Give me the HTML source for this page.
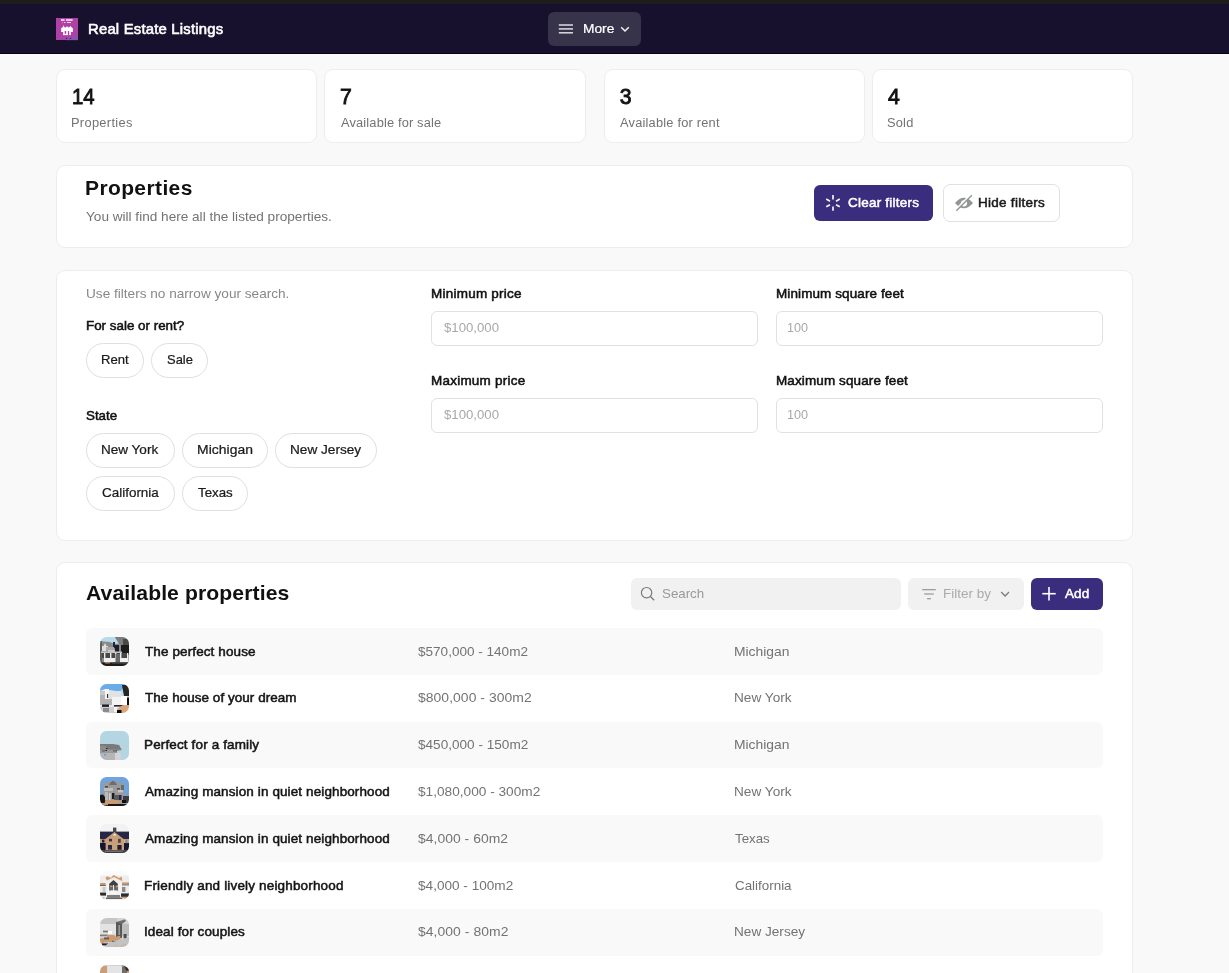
<!DOCTYPE html>
<html lang="en">
<head>
<meta charset="utf-8">
<title>Real Estate Listings</title>
<style>
*{box-sizing:border-box;margin:0;padding:0}
html,body{width:1229px;height:973px;overflow:hidden;background:#f9f9f9}
body{position:relative;font-family:"Liberation Sans",sans-serif;color:#111}
.abs{position:absolute}
.t{position:absolute;white-space:nowrap;line-height:1}
.card{position:absolute;background:#fff;border:1px solid #ededed;border-radius:9px}
#strip{left:0;top:0;width:1229px;height:4px;background:#1d1d1b}
#hdr{left:0;top:4px;width:1229px;height:50px;background:#17112e;border-bottom:1px solid #06021f}
#logo{left:56px;top:18px;width:22px;height:22px;background:#b03fa6}
#more{left:548px;top:12px;width:93px;height:34px;border-radius:6px;background:#37334a}
.pill{position:absolute;height:35px;border:1px solid #dfdfdf;border-radius:18px;background:#fff}
.inp{position:absolute;height:35px;width:327px;border:1px solid #e1e1e1;border-radius:6px;background:#fff}
.row{position:absolute;left:86px;width:1017px;height:46.75px;border-radius:6px}
.row.z{background:#f9f9f9}
#txt{position:absolute;left:0;top:0;width:1229px;height:973px;will-change:transform}
</style>
</head>
<body>
<div id="strip" class="abs"></div>
<div id="hdr" class="abs"></div>
<div id="logo" class="abs"></div>
<div id="more" class="abs"></div>
<div class="card" style="left:56px;top:69px;width:261px;height:74px"></div>
<div class="card" style="left:324px;top:69px;width:262px;height:74px"></div>
<div class="card" style="left:604px;top:69px;width:261px;height:74px"></div>
<div class="card" style="left:872px;top:69px;width:261px;height:74px"></div>
<div class="card" style="left:56px;top:165px;width:1077px;height:83px"></div>
<div class="abs" style="left:814px;top:185px;width:119px;height:36px;border-radius:6px;background:#3a2d7d"></div>
<div class="abs" style="left:943px;top:184px;width:117px;height:38px;border-radius:7px;background:#fff;border:1px solid #e1e1e1"></div>
<div class="card" style="left:56px;top:270px;width:1077px;height:271px"></div>
<div class="pill" style="left:86px;top:343px;width:58px"></div>
<div class="pill" style="left:151px;top:343px;width:57px"></div>
<div class="pill" style="left:86px;top:433px;width:89px"></div>
<div class="pill" style="left:182px;top:433px;width:86px"></div>
<div class="pill" style="left:275px;top:433px;width:102px"></div>
<div class="pill" style="left:86px;top:476px;width:89px"></div>
<div class="pill" style="left:182px;top:476px;width:66px"></div>
<div class="inp" style="left:431px;top:311px"></div>
<div class="inp" style="left:776px;top:311px"></div>
<div class="inp" style="left:431px;top:398px"></div>
<div class="inp" style="left:776px;top:398px"></div>
<div class="card" style="left:56px;top:562px;width:1077px;height:430px"></div>
<div class="abs" style="left:631px;top:578px;width:270px;height:31.6px;border-radius:6px;background:#f1f1f1"></div>
<div class="abs" style="left:908px;top:578px;width:116px;height:31.6px;border-radius:6px;background:#f1f1f1"></div>
<div class="abs" style="left:1031px;top:578px;width:72px;height:31.6px;border-radius:6px;background:#3a2d7d"></div>

<div class="row z" style="top:628.30px;height:46.60px"></div>
<svg class="abs" style="left:100px;top:636.80px" width="29" height="29" viewBox="0 0 29 29"><defs><clipPath id="c0"><rect width="29" height="29" rx="6.5"/></clipPath><filter id="f0" x="-10%" y="-10%" width="120%" height="120%"><feGaussianBlur stdDeviation=".45"/></filter></defs><g clip-path="url(#c0)"><g filter="url(#f0)"><rect x="-3" y="-3" width="35" height="35" fill="#8a8a8a"/><polygon points="0,0 15,0 19,6.5 14,7 10,5 4,4.5 0,4" fill="#b6dcea"/><polygon points="15,0 29,0 29,9 22,9 19,6.5" fill="#7d7d7d"/><rect x="21" y="8" width="8" height="10" fill="#1b1b1b"/><rect x="23" y="2" width="6" height="6" fill="#4a4a4a"/><rect x="13" y="5" width="2" height="6" fill="#26233a"/><rect x="15" y="8" width="4" height="7" fill="#1c1a2c"/><polygon points="2,13 5,6 8,13" fill="#e6e6e6"/><rect x="2" y="9" width="6" height="5" fill="#dedede"/><rect x="0" y="4" width="2" height="25" fill="#5e5e5e"/><rect x="6" y="10" width="8" height="4" fill="#a9a9a9"/><rect x="8" y="13" width="7" height="2" fill="#c9c9c9"/><rect x="1" y="14.5" width="21" height="1.5" fill="#c4c4c4"/><rect x="2" y="16" width="26" height="5" fill="#4a4a4a"/><rect x="4" y="16" width="1.4" height="9" fill="#ececec"/><rect x="10" y="16" width="1.4" height="9" fill="#ececec"/><rect x="15" y="16" width="1.4" height="9" fill="#ececec"/><rect x="20" y="16" width="1.4" height="9" fill="#ececec"/><rect x="27" y="16" width="1.4" height="9" fill="#ececec"/><rect x="4" y="21" width="11" height="4.5" fill="#efefef"/><rect x="20" y="21" width="8" height="4.5" fill="#f0f0f0"/><rect x="15.5" y="17" width="4.5" height="8" fill="#6a6a6a"/><rect x="0" y="25.4" width="29" height="3.6" fill="#1e1e1e"/><rect x="5" y="25.4" width="5" height="1" fill="#d79a5f"/><rect x="12" y="25.4" width="16" height="1.2" fill="#4d4d4d"/></g></g></svg>
<div class="row" style="top:674.90px;height:46.85px"></div>
<svg class="abs" style="left:100px;top:683.90px" width="29" height="29" viewBox="0 0 29 29"><defs><clipPath id="c1"><rect width="29" height="29" rx="6.5"/></clipPath><filter id="f1" x="-10%" y="-10%" width="120%" height="120%"><feGaussianBlur stdDeviation=".45"/></filter></defs><g clip-path="url(#c1)"><g filter="url(#f1)"><rect x="-3" y="-3" width="35" height="35" fill="#e9e9e9"/><polygon points="0,0 29,0 29,4 22,9 16,7 9,6 5,5 0,7" fill="#6aabea"/><polygon points="21,8 22,4 24,8 24,12 21,12" fill="#bfe0ef"/><polygon points="22,1 29,1 29,12 24,12 23,7" fill="#262626"/><rect x="0" y="7" width="5" height="14" fill="#c9c9c9"/><rect x="0" y="11" width="13" height="10" fill="#b4b4b4"/><rect x="5" y="5" width="4" height="10" fill="#f4f4f4"/><rect x="7" y="10" width="1.2" height="4" fill="#333"/><rect x="9" y="7" width="12" height="8" fill="#e2e2e2"/><rect x="12" y="13" width="10" height="8" fill="#f3f3f3"/><rect x="21" y="12" width="6" height="9" fill="#ffffff"/><rect x="27" y="13" width="2" height="8" fill="#111"/><rect x="27" y="12.6" width="2" height="1.2" fill="#c98a55"/><rect x="2" y="20.5" width="7" height="2.4" fill="#1c1a2a"/><rect x="14" y="21" width="9" height="1.6" fill="#2a2740"/><polygon points="17,25 23,21 29,21 29,29 21,29" fill="#d9a67e"/><rect x="17" y="26" width="4.5" height="3" fill="#111"/><rect x="0" y="23" width="17" height="6" fill="#cfcfcf"/><rect x="3" y="24" width="6" height="4" fill="#8c8c8c"/><rect x="14" y="23" width="3" height="5" fill="#f5f5f5"/></g></g></svg>
<div class="row z" style="top:721.75px;height:46.65px"></div>
<svg class="abs" style="left:100px;top:731.00px" width="29" height="29" viewBox="0 0 29 29"><defs><clipPath id="c2"><rect width="29" height="29" rx="6.5"/></clipPath><filter id="f2" x="-10%" y="-10%" width="120%" height="120%"><feGaussianBlur stdDeviation=".45"/></filter></defs><g clip-path="url(#c2)"><g filter="url(#f2)"><rect x="-3" y="-3" width="35" height="35" fill="#b4d6e2"/><polygon points="0,13 13,13 13,14 19,14 22,19 17,20 17,29 0,29" fill="#8c8c8c"/><polygon points="0,13 13,13 19,14 21,18.4 9,18.4 4,14.6 0,15" fill="#7a7a7a"/><rect x="0" y="19" width="16" height="3" fill="#9a9a9a"/><rect x="0" y="22" width="17" height="7" fill="#b5b5b5"/><rect x="15" y="22" width="5.5" height="7" fill="#d4d4d4"/><rect x="2" y="19.4" width="3" height="1" fill="#555"/><rect x="13" y="19.4" width="4" height="1" fill="#555"/><rect x="4" y="23" width="2" height="1.4" fill="#5b9be0"/><rect x="6" y="17" width="1.6" height="1" fill="#241f4a"/><rect x="5.5" y="19" width="1.6" height="1" fill="#241f4a"/></g></g></svg>
<div class="row" style="top:768.40px;height:46.50px"></div>
<svg class="abs" style="left:100px;top:777.20px" width="29" height="29" viewBox="0 0 29 29"><defs><clipPath id="c3"><rect width="29" height="29" rx="6.5"/></clipPath><filter id="f3" x="-10%" y="-10%" width="120%" height="120%"><feGaussianBlur stdDeviation=".45"/></filter></defs><g clip-path="url(#c3)"><g filter="url(#f3)"><rect x="-3" y="-3" width="35" height="35" fill="#6fa4de"/><polygon points="3,7 6,5 10,5 12,4 15,4 18,6 19,5 20,4 22,6 24,7 24,19 29,17 29,27 0,27 0,19 3,15" fill="#9a9a9a"/><polygon points="10,6 13,3.4 16,6 17,8 9,8" fill="#6d6d6d"/><rect x="5" y="9" width="3" height="1.6" fill="#4c4c4c"/><rect x="17" y="11" width="3" height="1.6" fill="#505050"/><rect x="21" y="8" width="3" height="5" fill="#6a6a6a"/><rect x="4" y="11" width="9" height="3" fill="#bdbdbd"/><rect x="18" y="13" width="5" height="2.4" fill="#c4c4c4"/><rect x="5" y="15" width="3" height="8" fill="#b9b9b9"/><rect x="12" y="16" width="2.4" height="6" fill="#1a1a1a"/><rect x="9" y="16" width="1.6" height="7" fill="#cfcfcf"/><rect x="19" y="18" width="2.6" height="5" fill="#2d2850"/><rect x="14" y="18" width="5" height="5" fill="#5c5c5c"/><polygon points="0,18 3,17.4 5,20 5,26 0,26" fill="#121212"/><rect x="23" y="19" width="6" height="7" fill="#3a3a3a"/><rect x="22" y="23" width="4" height="3" fill="#111"/><polygon points="8,23 18,23 21,24.4 17,27 4,27 5,25" fill="#c99b73"/><rect x="0" y="27" width="29" height="2" fill="#171717"/><rect x="3" y="26.6" width="5" height="1.6" fill="#c4925f"/></g></g></svg>
<div class="row z" style="top:814.90px;height:46.85px"></div>
<svg class="abs" style="left:100px;top:824.20px" width="29" height="29" viewBox="0 0 29 29"><defs><clipPath id="c4"><rect width="29" height="29" rx="6.5"/></clipPath><filter id="f4" x="-10%" y="-10%" width="120%" height="120%"><feGaussianBlur stdDeviation=".45"/></filter></defs><g clip-path="url(#c4)"><g filter="url(#f4)"><rect x="-3" y="-3" width="35" height="35" fill="#f2f2f2"/><rect x="0" y="7.6" width="29" height="8" fill="#282546"/><rect x="13" y="3.6" width="3.4" height="5" fill="#474747"/><polygon points="14.5,8 25,16 4,16" fill="#c99f7a"/><rect x="5" y="15" width="19.5" height="11.4" fill="#c99f7a"/><rect x="0" y="15" width="5" height="4" fill="#c99f7a"/><rect x="24.5" y="15" width="4.5" height="4" fill="#c99f7a"/><rect x="0" y="19" width="5.6" height="7.4" fill="#161233"/><rect x="24" y="19" width="5" height="7.4" fill="#161233"/><rect x="2" y="15.6" width="2.4" height="3" fill="#222038"/><rect x="25.4" y="15.6" width="2" height="3.6" fill="#8a8a8a"/><rect x="13.6" y="10" width="2" height="1.6" fill="#f1f1f1"/><rect x="9" y="14.8" width="3" height="2.6" fill="#34324c"/><rect x="18" y="14.8" width="2.8" height="4" fill="#4a4a4a"/><rect x="8" y="21" width="4" height="4.6" fill="#2a2744"/><rect x="17.4" y="21" width="4.2" height="4.8" fill="#1f1d30"/><rect x="0" y="26.2" width="29" height="2.8" fill="#3a3a3a"/><rect x="5" y="27" width="18" height="0.9" fill="#777"/></g></g></svg>
<div class="row" style="top:861.75px;height:47.05px"></div>
<svg class="abs" style="left:100px;top:871.20px" width="29" height="29" viewBox="0 0 29 29"><defs><clipPath id="c5"><rect width="29" height="29" rx="6.5"/></clipPath><filter id="f5" x="-10%" y="-10%" width="120%" height="120%"><feGaussianBlur stdDeviation=".45"/></filter></defs><g clip-path="url(#c5)"><g filter="url(#f5)"><rect x="-3" y="-3" width="35" height="35" fill="#ededed"/><rect x="0" y="0" width="29" height="4.6" fill="#fbfbfb"/><polygon points="5.6,6 8,5.6 11,7 13.4,4 16.4,5.4 19,7 21.6,5.6 22.4,10 21,9.6 14,6 7,9.6 6,8" fill="#d29a68"/><rect x="0" y="12" width="5.6" height="2" fill="#cf9662"/><rect x="22" y="11.4" width="7" height="2" fill="#cf9662"/><rect x="0" y="14" width="5.8" height="1" fill="#666"/><rect x="22" y="13.4" width="7" height="1" fill="#666"/><polygon points="13.5,9 18,13 17,17 10,17 9,13" fill="#3f3f3f"/><rect x="9" y="14.6" width="9" height="5" fill="#6b6b6b"/><rect x="13" y="14" width="1" height="6" fill="#e8e8e8"/><rect x="10" y="14.6" width="2.4" height="1.4" fill="#d09560"/><rect x="16" y="14.6" width="2" height="1.6" fill="#d09560"/><rect x="7.6" y="12" width="1.2" height="12" fill="#fafafa"/><rect x="19.4" y="12" width="1.2" height="12" fill="#fafafa"/><rect x="22" y="16" width="3.4" height="5" fill="#8b8b8b"/><rect x="2.6" y="16" width="3" height="5" fill="#cacaca"/><rect x="10.4" y="19.6" width="6.4" height="3.4" fill="#f6f6f6"/><rect x="0" y="21.6" width="6" height="3" fill="#2b2b2b"/><rect x="21" y="22.4" width="8" height="3.4" fill="#2d2d2d"/><rect x="7" y="24" width="13" height="2.6" fill="#7b7b7b"/><rect x="6" y="26.6" width="16" height="1.2" fill="#444"/><rect x="22" y="26" width="5" height="1.4" fill="#cf9662"/><rect x="2.6" y="26.4" width="2" height="1" fill="#cf9662"/></g></g></svg>
<div class="row z" style="top:908.80px;height:47.20px"></div>
<svg class="abs" style="left:100px;top:918.10px" width="29" height="29" viewBox="0 0 29 29"><defs><clipPath id="c6"><rect width="29" height="29" rx="6.5"/></clipPath><filter id="f6" x="-10%" y="-10%" width="120%" height="120%"><feGaussianBlur stdDeviation=".45"/></filter></defs><g clip-path="url(#c6)"><g filter="url(#f6)"><rect x="-3" y="-3" width="35" height="35" fill="#d5d5d5"/><rect x="0" y="0" width="17" height="6" fill="#c6c6c6"/><rect x="0" y="6" width="16" height="10" fill="#e3e3e3"/><rect x="16" y="4" width="6" height="16" fill="#585858"/><rect x="18.4" y="7" width="1.6" height="10" fill="#9a9a9a"/><polygon points="16,4 25,1.6 26,3 22,6" fill="#6e6e6e"/><rect x="22" y="6" width="7" height="12" fill="#bdbdbd"/><rect x="23.6" y="16" width="3" height="4.4" fill="#4d4d4d"/><rect x="3" y="12.6" width="5" height="1.8" fill="#777"/><rect x="8" y="13" width="4" height="3" fill="#fbfbfb"/><rect x="0" y="16.6" width="8" height="1.6" fill="#7d7d7d"/><polygon points="7,17 14,17 16,19 18,18 20,18 21,21.6 14,22.6 12,24 4,24.6 2,26 0,24 0,20.6 4,20 7,20" fill="#cb9a70"/><rect x="4" y="19.4" width="5" height="2" fill="#5d5d5d"/><rect x="12" y="22.8" width="6" height="1.4" fill="#4e4e4e"/><rect x="2" y="25.4" width="6" height="2" fill="#23203a"/><polygon points="9,24.6 21,22 29,19 29,29 4,29" fill="#c2c2c2"/><rect x="15" y="27.4" width="1" height="1" fill="#d59a62"/><rect x="21" y="27.4" width="1" height="1" fill="#d59a62"/><rect x="23" y="26.4" width="1" height="1" fill="#d59a62"/><rect x="25" y="26.4" width="1" height="1" fill="#d59a62"/><rect x="23" y="1.2" width="1" height="1" fill="#d59a62"/></g></g></svg>
<div class="row" style="top:956.00px;height:47.00px"></div>
<svg class="abs" style="left:100px;top:964.80px" width="29" height="29" viewBox="0 0 29 29"><defs><clipPath id="c7"><rect width="29" height="29" rx="6.5"/></clipPath><filter id="f7" x="-10%" y="-10%" width="120%" height="120%"><feGaussianBlur stdDeviation=".45"/></filter></defs><g clip-path="url(#c7)"><g filter="url(#f7)"><rect x="-3" y="-3" width="35" height="35" fill="#e4e4e4"/><rect x="0" y="0" width="29" height="1" fill="#d2d2d2"/><polygon points="0,3 3,0.6 7,1 7.6,29 0,29" fill="#cb9c78"/><polygon points="22,0 29,3 29,29 22,29" fill="#6d6d6d"/><rect x="21.6" y="0" width="1.4" height="2" fill="#d09a66"/><polygon points="24,1 29,4 29,8 26,5" fill="#2f2f2f"/><rect x="27" y="6" width="2" height="3" fill="#d09a66"/></g></g></svg>
<div id="txt">
<div class="t" style="left:88.22px;top:23.05px;font-size:13.9px;color:#fff;transform:scaleX(1.0700);transform-origin:0 0;letter-spacing:0.183px;-webkit-text-stroke:0.56px #fff">Real Estate Listings</div>
<div class="t" style="left:583.24px;top:22.05px;font-size:13px;color:#fff;transform:scaleX(1.0566);transform-origin:0 0;-webkit-text-stroke:0.23px #fff">More</div>
<div class="t" style="left:71.55px;top:86.05px;font-size:21.2px;color:#111;transform:scaleX(0.9597);transform-origin:0 0;-webkit-text-stroke:0.85px #111">14</div>
<div class="t" style="left:340.03px;top:86.05px;font-size:21.2px;color:#111;-webkit-text-stroke:0.85px #111">7</div>
<div class="t" style="left:619.76px;top:86.05px;font-size:21.2px;color:#111;-webkit-text-stroke:0.85px #111">3</div>
<div class="t" style="left:887.89px;top:86.05px;font-size:21.2px;color:#111;-webkit-text-stroke:0.85px #111">4</div>
<div class="t" style="left:71.40px;top:117.05px;font-size:12px;color:#737373;transform:scaleX(1.0700);transform-origin:0 0;letter-spacing:0.289px">Properties</div>
<div class="t" style="left:340.60px;top:117.05px;font-size:12px;color:#737373;transform:scaleX(1.0700);transform-origin:0 0;letter-spacing:0.141px">Available for sale</div>
<div class="t" style="left:619.50px;top:117.05px;font-size:12px;color:#737373;transform:scaleX(1.0700);transform-origin:0 0;letter-spacing:0.184px">Available for rent</div>
<div class="t" style="left:887.30px;top:117.05px;font-size:12px;color:#737373;transform:scaleX(1.0700);transform-origin:0 0;letter-spacing:0.194px">Sold</div>
<div class="t" style="left:84.99px;top:179.05px;font-size:19.6px;color:#111;transform:scaleX(1.0700);transform-origin:0 0;letter-spacing:0.377px;font-weight:700">Properties</div>
<div class="t" style="left:86.09px;top:210.05px;font-size:13px;color:#737373;transform:scaleX(1.0457);transform-origin:0 0">You will find here all the listed properties.</div>
<div class="t" style="left:847.72px;top:197.05px;font-size:12.6px;color:#fff;transform:scaleX(1.0700);transform-origin:0 0;letter-spacing:0.216px;-webkit-text-stroke:0.50px #fff">Clear filters</div>
<div class="t" style="left:977.80px;top:197.05px;font-size:12.6px;color:#1a1a1a;transform:scaleX(1.0700);transform-origin:0 0;letter-spacing:0.262px;-webkit-text-stroke:0.50px #1a1a1a">Hide filters</div>
<div class="t" style="left:85.55px;top:287.05px;font-size:13px;color:#888;transform:scaleX(1.0464);transform-origin:0 0">Use filters no narrow your search.</div>
<div class="t" style="left:85.61px;top:320.05px;font-size:12.6px;color:#111;transform:scaleX(1.0631);transform-origin:0 0;-webkit-text-stroke:0.50px #111">For sale or rent?</div>
<div class="t" style="left:100.89px;top:353.05px;font-size:13px;color:#1a1a1a;transform:scaleX(1.0067);transform-origin:0 0;-webkit-text-stroke:0.23px #1a1a1a">Rent</div>
<div class="t" style="left:166.91px;top:353.05px;font-size:13px;color:#1a1a1a;transform:scaleX(0.9952);transform-origin:0 0;-webkit-text-stroke:0.23px #1a1a1a">Sale</div>
<div class="t" style="left:86.34px;top:410.05px;font-size:12.6px;color:#111;transform:scaleX(1.0589);transform-origin:0 0;-webkit-text-stroke:0.50px #111">State</div>
<div class="t" style="left:101.16px;top:443.05px;font-size:13px;color:#1a1a1a;transform:scaleX(1.0409);transform-origin:0 0;-webkit-text-stroke:0.23px #1a1a1a">New York</div>
<div class="t" style="left:197.03px;top:443.05px;font-size:13px;color:#1a1a1a;transform:scaleX(1.0700);transform-origin:0 0;letter-spacing:0.049px;-webkit-text-stroke:0.23px #1a1a1a">Michigan</div>
<div class="t" style="left:289.95px;top:443.05px;font-size:13px;color:#1a1a1a;transform:scaleX(1.0482);transform-origin:0 0;-webkit-text-stroke:0.23px #1a1a1a">New Jersey</div>
<div class="t" style="left:101.59px;top:486.05px;font-size:13px;color:#1a1a1a;transform:scaleX(1.0346);transform-origin:0 0;-webkit-text-stroke:0.23px #1a1a1a">California</div>
<div class="t" style="left:197.91px;top:486.05px;font-size:13px;color:#1a1a1a;transform:scaleX(1.0215);transform-origin:0 0;-webkit-text-stroke:0.23px #1a1a1a">Texas</div>
<div class="t" style="left:430.70px;top:288.05px;font-size:12.6px;color:#111;transform:scaleX(1.0700);transform-origin:0 0;letter-spacing:0.230px;-webkit-text-stroke:0.50px #111">Minimum price</div>
<div class="t" style="left:776.00px;top:288.05px;font-size:12.6px;color:#111;transform:scaleX(1.0700);transform-origin:0 0;letter-spacing:0.100px;-webkit-text-stroke:0.50px #111">Minimum square feet</div>
<div class="t" style="left:430.70px;top:375.05px;font-size:12.6px;color:#111;transform:scaleX(1.0700);transform-origin:0 0;letter-spacing:0.218px;-webkit-text-stroke:0.50px #111">Maximum price</div>
<div class="t" style="left:775.70px;top:375.05px;font-size:12.6px;color:#111;transform:scaleX(1.0700);transform-origin:0 0;letter-spacing:0.113px;-webkit-text-stroke:0.50px #111">Maximum square feet</div>
<div class="t" style="left:443.50px;top:321.05px;font-size:13px;color:#a8a8a8;transform:scaleX(1.0149);transform-origin:0 0">$100,000</div>
<div class="t" style="left:787.31px;top:321.05px;font-size:13px;color:#a8a8a8;transform:scaleX(0.9682);transform-origin:0 0">100</div>
<div class="t" style="left:443.50px;top:408.05px;font-size:13px;color:#a8a8a8;transform:scaleX(1.0149);transform-origin:0 0">$100,000</div>
<div class="t" style="left:787.31px;top:408.05px;font-size:13px;color:#a8a8a8;transform:scaleX(0.9682);transform-origin:0 0">100</div>
<div class="t" style="left:86.47px;top:584.05px;font-size:19.8px;color:#111;transform:scaleX(1.0700);transform-origin:0 0;letter-spacing:0.086px;font-weight:700">Available properties</div>
<div class="t" style="left:662.18px;top:587.05px;font-size:13px;color:#999;transform:scaleX(1.0236);transform-origin:0 0">Search</div>
<div class="t" style="left:942.84px;top:587.05px;font-size:13px;color:#ababab;transform:scaleX(1.0395);transform-origin:0 0">Filter by</div>
<div class="t" style="left:1064.55px;top:588.05px;font-size:12.6px;color:#fff;transform:scaleX(1.0700);transform-origin:0 0;letter-spacing:0.124px;-webkit-text-stroke:0.50px #fff">Add</div>
<div class="t" style="left:144.54px;top:646.05px;font-size:12.6px;color:#151515;transform:scaleX(1.0700);transform-origin:0 0;letter-spacing:0.110px;-webkit-text-stroke:0.50px #151515">The perfect house</div>
<div class="t" style="left:418.20px;top:645.05px;font-size:13px;color:#737373;transform:scaleX(1.0419);transform-origin:0 0">$570,000 - 140m2</div>
<div class="t" style="left:734.32px;top:645.05px;font-size:13px;color:#737373;transform:scaleX(1.0660);transform-origin:0 0">Michigan</div>
<div class="t" style="left:144.54px;top:692.05px;font-size:12.6px;color:#151515;transform:scaleX(1.0700);transform-origin:0 0;letter-spacing:0.041px;-webkit-text-stroke:0.50px #151515">The house of your dream</div>
<div class="t" style="left:418.20px;top:691.05px;font-size:13px;color:#737373;transform:scaleX(1.0700);transform-origin:0 0;letter-spacing:0.047px">$800,000 - 300m2</div>
<div class="t" style="left:734.33px;top:691.05px;font-size:13px;color:#737373;transform:scaleX(1.0489);transform-origin:0 0">New York</div>
<div class="t" style="left:143.70px;top:739.05px;font-size:12.6px;color:#151515;transform:scaleX(1.0700);transform-origin:0 0;letter-spacing:0.136px;-webkit-text-stroke:0.50px #151515">Perfect for a family</div>
<div class="t" style="left:418.20px;top:738.05px;font-size:13px;color:#737373;transform:scaleX(1.0448);transform-origin:0 0">$450,000 - 150m2</div>
<div class="t" style="left:734.32px;top:738.05px;font-size:13px;color:#737373;transform:scaleX(1.0660);transform-origin:0 0">Michigan</div>
<div class="t" style="left:144.75px;top:786.05px;font-size:12.6px;color:#151515;transform:scaleX(1.0700);transform-origin:0 0;letter-spacing:0.113px;-webkit-text-stroke:0.50px #151515">Amazing mansion in quiet neighborhood</div>
<div class="t" style="left:418.20px;top:785.05px;font-size:13px;color:#737373;transform:scaleX(1.0506);transform-origin:0 0">$1,080,000 - 300m2</div>
<div class="t" style="left:734.33px;top:785.05px;font-size:13px;color:#737373;transform:scaleX(1.0489);transform-origin:0 0">New York</div>
<div class="t" style="left:144.75px;top:833.05px;font-size:12.6px;color:#151515;transform:scaleX(1.0700);transform-origin:0 0;letter-spacing:0.113px;-webkit-text-stroke:0.50px #151515">Amazing mansion in quiet neighborhood</div>
<div class="t" style="left:418.20px;top:832.05px;font-size:13px;color:#737373;transform:scaleX(1.0700);transform-origin:0 0;letter-spacing:0.028px">$4,000 - 60m2</div>
<div class="t" style="left:735.19px;top:832.05px;font-size:13px;color:#737373;transform:scaleX(1.0225);transform-origin:0 0">Texas</div>
<div class="t" style="left:143.70px;top:880.05px;font-size:12.6px;color:#151515;transform:scaleX(1.0700);transform-origin:0 0;letter-spacing:0.163px;-webkit-text-stroke:0.50px #151515">Friendly and lively neighborhood</div>
<div class="t" style="left:418.20px;top:879.05px;font-size:13px;color:#737373;transform:scaleX(1.0460);transform-origin:0 0">$4,000 - 100m2</div>
<div class="t" style="left:734.77px;top:879.05px;font-size:13px;color:#737373;transform:scaleX(1.0297);transform-origin:0 0">California</div>
<div class="t" style="left:143.70px;top:926.05px;font-size:12.6px;color:#151515;transform:scaleX(1.0700);transform-origin:0 0;letter-spacing:0.108px;-webkit-text-stroke:0.50px #151515">Ideal for couples</div>
<div class="t" style="left:418.20px;top:925.05px;font-size:13px;color:#737373;transform:scaleX(1.0700);transform-origin:0 0;letter-spacing:0.059px">$4,000 - 80m2</div>
<div class="t" style="left:734.34px;top:925.05px;font-size:13px;color:#737373;transform:scaleX(1.0465);transform-origin:0 0">New Jersey</div>
<div class="t" style="left:418.20px;top:971.05px;font-size:13px;color:#737373;transform:scaleX(1.0539);transform-origin:0 0">$3,000 - 70m2</div>
</div>
<svg class="abs" style="left:0;top:0" width="1229" height="973" viewBox="0 0 1229 973" fill="none">
<g fill="#fff">
<polygon points="60.8,29 63.6,25.9 66.4,29"/><rect x="61.2" y="28.4" width="4" height="3.6"/>
<polygon points="67.6,29 70.4,25.9 73.2,29"/><rect x="69" y="28.4" width="3.9" height="3.6"/>
<polygon points="62.4,30 67,26.3 71.6,30"/><rect x="63.1" y="29.4" width="7.8" height="5.7"/>
<rect x="61" y="19.2" width="3.6" height="1.7" opacity=".85"/><rect x="66" y="19.2" width="6.6" height="1.7" opacity=".85"/>
<rect x="64" y="22" width="1.6" height="1" opacity=".8"/><rect x="67" y="22" width="4" height="1" opacity=".8"/>
</g>
<rect x="64.7" y="31" width="1.5" height="2.9" fill="#b03fa6"/><rect x="67.9" y="31" width="1.3" height="4.1" fill="#b03fa6"/>
<circle cx="62.4" cy="22.5" r=".6" fill="#f0a060"/><circle cx="63.5" cy="25.6" r=".5" fill="#f0a060"/>
<g fill="#6d63b4"><rect x="66" y="38.4" width="12" height="1.8" opacity=".7"/><circle cx="75.4" cy="33.4" r=".6"/><circle cx="74.4" cy="35.4" r=".6"/><circle cx="76.4" cy="35.6" r=".6"/><circle cx="73.4" cy="36.4" r=".6"/><circle cx="71.4" cy="36.6" r=".6"/><circle cx="63.6" cy="37.6" r=".7"/><circle cx="61.4" cy="38.4" r=".5"/><circle cx="59.4" cy="38.4" r=".5"/><circle cx="75.4" cy="37.4" r=".6"/><circle cx="77.2" cy="37.2" r=".6"/></g>
<g fill="#2c2080"><circle cx="66.6" cy="38.4" r=".7"/><circle cx="70.5" cy="38.4" r=".7"/></g>
<g stroke="#dcdce0" stroke-width="1.5"><line x1="558.8" y1="25" x2="573" y2="25"/><line x1="558.8" y1="28.9" x2="573" y2="28.9"/><line x1="558.8" y1="32.8" x2="573" y2="32.8"/></g>
<polyline points="621.2,27.3 625,31 628.8,27.3" stroke="#f2f2f2" stroke-width="1.5"/>
<g stroke="#f6f6ea" stroke-width="1.7"><line x1="833.00" y1="199.40" x2="833.00" y2="195.10"/><line x1="836.03" y1="201.15" x2="839.75" y2="199.00"/><line x1="836.03" y1="204.65" x2="839.75" y2="206.80"/><line x1="833.00" y1="206.40" x2="833.00" y2="210.70"/><line x1="829.97" y1="204.65" x2="826.25" y2="206.80"/><line x1="829.97" y1="201.15" x2="826.25" y2="199.00"/></g>
<path d="M955 203 Q964 192.3 973 203 Q964 213.7 955 203Z" fill="#939595"/>
<circle cx="964" cy="203.3" r="3.1" fill="#fff"/>
<line x1="970.6" y1="194.6" x2="955.1" y2="210.1" stroke="#fff" stroke-width="1.5"/>
<line x1="971.9" y1="195.2" x2="956.4" y2="210.7" stroke="#939595" stroke-width="1.4"/>
<circle cx="646.6" cy="592.7" r="5.2" stroke="#7a7a7a" stroke-width="1.2"/><line x1="650.4" y1="596.5" x2="654.2" y2="600.3" stroke="#7a7a7a" stroke-width="1.3"/>
<g stroke="#9c9c9c" stroke-width="1.3"><line x1="922.2" y1="589.65" x2="935.8" y2="589.65"/><line x1="924.2" y1="594" x2="933.8" y2="594"/><line x1="927.1" y1="598.7" x2="930.9" y2="598.7"/></g>
<polyline points="1001.2,592 1005.1,596 1009,592" stroke="#7c7c7c" stroke-width="1.3"/>
<g stroke="#fff" stroke-width="1.6"><line x1="1042.3" y1="593.7" x2="1055.7" y2="593.7"/><line x1="1049" y1="587" x2="1049" y2="600.4"/></g>
</svg>

</body>
</html>
